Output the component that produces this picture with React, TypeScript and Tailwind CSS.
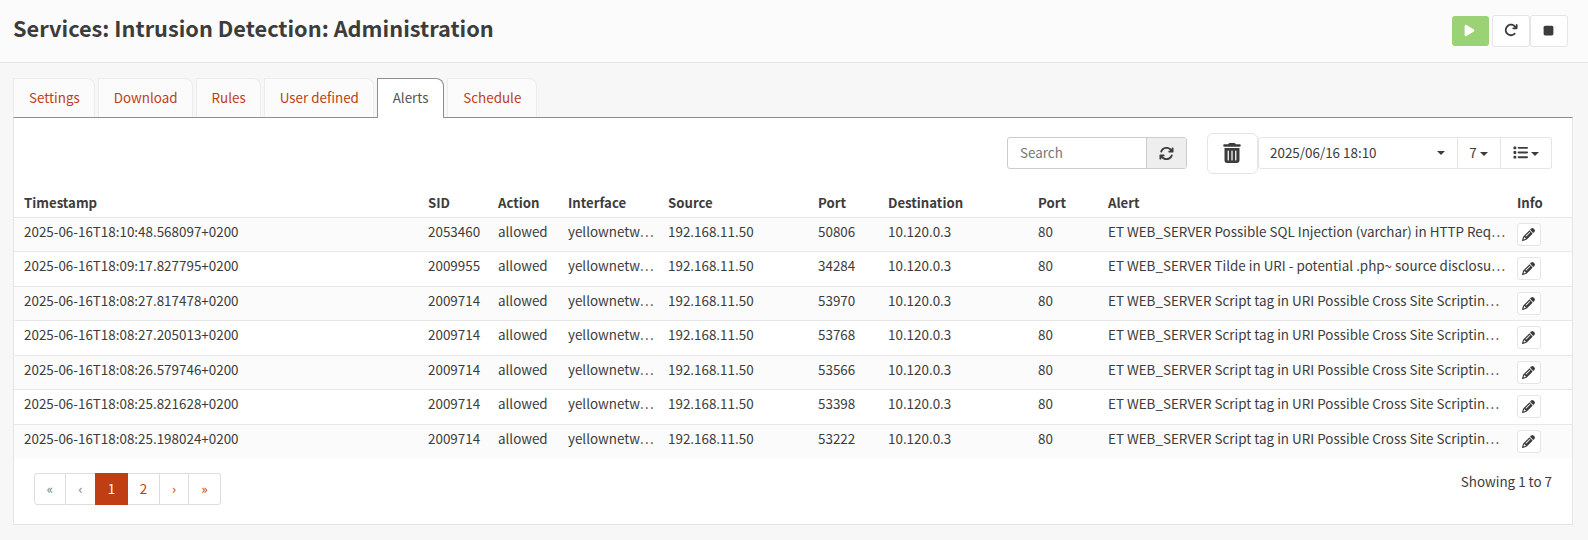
import React from "react";
import { FaPlay, FaStop, FaArrowRotateRight, FaArrowsRotate, FaTrashCan, FaList, FaPencil } from "react-icons/fa6";

const tabs = [
  { name: "Settings", w: "w-[82px]" },
  { name: "Download", w: "w-[95px]" },
  { name: "Rules", w: "w-[65.3px]" },
  { name: "User defined", w: "w-[110.2px]" },
  { name: "Alerts", w: "w-[67.8px]", active: true },
  { name: "Schedule", w: "w-[90px]" },
];

const headers = ["Timestamp", "SID", "Action", "Interface", "Source", "Port", "Destination", "Port", "Alert", "Info"];

const sqlAlert = "ET WEB_SERVER Possible SQL Injection (varchar) in HTTP Req…";
const tildeAlert = "ET WEB_SERVER Tilde in URI - potential .php~ source disclosu…";
const scriptAlert = "ET WEB_SERVER Script tag in URI Possible Cross Site Scriptin…";

const rows = [
  ["2025-06-16T18:10:48.568097+0200", "2053460", "50806", sqlAlert],
  ["2025-06-16T18:09:17.827795+0200", "2009955", "34284", tildeAlert],
  ["2025-06-16T18:08:27.817478+0200", "2009714", "53970", scriptAlert],
  ["2025-06-16T18:08:27.205013+0200", "2009714", "53768", scriptAlert],
  ["2025-06-16T18:08:26.579746+0200", "2009714", "53566", scriptAlert],
  ["2025-06-16T18:08:25.821628+0200", "2009714", "53398", scriptAlert],
  ["2025-06-16T18:08:25.198024+0200", "2009714", "53222", scriptAlert],
];

const grid = "grid grid-cols-[404px_70px_70px_100px_150px_70px_150px_70px_409px_60px] pl-[10px]";

const Caret = ({ className = "" }: { className?: string }) => (
  <span className={`inline-block border-x-4 border-t-4 border-x-transparent border-t-[#3c3c3b] ${className}`} />
);

function Pagination() {
  return (
    <div className="mt-[14.5px] flex h-[32px] w-[187px] rounded-[3px] text-center leading-[28px]">
      <span className="w-[32px] rounded-l-[3px] border border-[#ddd] text-[#777]">«</span>
      <span className="w-[29px] border-y border-[#ddd] text-[#777]">‹</span>
      <span className="w-[33px] border-y border-[#c03e14] bg-[#c03e14] text-white">1</span>
      <span className="w-[32px] border-y border-r border-[#ddd] text-[#c03e14]">2</span>
      <span className="w-[29px] border-y border-r border-[#ddd] text-[#c03e14]">›</span>
      <span className="w-[32px] rounded-r-[3px] border-y border-r border-[#ddd] text-[#c03e14]">»</span>
    </div>
  );
}

export default function App() {
  return (
    <div className="h-[540px] w-[1588px] overflow-hidden bg-[#f7f7f7] font-['Noto_Sans_CJK_JP','Noto_Sans_CJK_SC',sans-serif] text-[13.42px] leading-[20px] text-[#3c3c3b]">
      <header className="flex h-[63px] items-start justify-between border-b border-[#e5e5e5] bg-[#fbfbfb] pr-[20px] pl-[13px]">
        <h1 className="pt-[13px] text-[21.76px] leading-[30px] font-bold">Services: Intrusion Detection: Administration</h1>
        <div className="flex pt-[15px]">
          <button className="mt-px mr-[3px] flex h-[30px] w-[37px] items-center justify-center rounded-[3px] bg-[#9bd275] pr-[2px] pb-px text-white">
            <FaPlay className="size-[13px]" />
          </button>
          <button className="flex h-[32px] w-[38px] items-center justify-center rounded-[3px] border border-[#e5e5e5] bg-white pr-px pb-[2px]">
            <FaArrowRotateRight className="size-[14px]" />
          </button>
          <button className="flex h-[32px] w-[38px] items-center justify-center rounded-[3px] border border-[#e5e5e5] bg-white pr-px pb-[2px]">
            <FaStop className="size-[13px]" />
          </button>
        </div>
      </header>

      <nav className="relative z-10 mt-[15px] ml-[13px] flex h-[40px] gap-[2.8px]">
        {tabs.map((t) => (
          <div
            key={t.name}
            className={
              t.active
                ? `${t.w} h-[40px] rounded-tr-[8px] border border-b-0 border-[#8f8f8f] bg-white pl-[15px] leading-[36px] text-[#555]`
                : `${t.w} h-[39px] rounded-tr-[8px] border border-b-0 border-[#ececec] bg-[#fbfbfb] pl-[15px] leading-[36px] text-[#c03e14]`
            }
          >
            {t.name}
          </div>
        ))}
      </nav>

      <main className="-mt-px ml-[13px] h-[408px] w-[1560px] border border-t-[#8f8f8f] border-r-[#e5e5e5] border-b-[#e5e5e5] border-l-[#e5e5e5] bg-white">
        <div className="flex h-[71px] items-start justify-end pt-[15px] pr-[20px]">
          <div className="mt-[4px] mr-[20px] flex h-[32px] w-[180px] rounded-[3px] border border-[#ccc]">
            <span className="w-[139px] border-r border-[#ccc] pl-[12px] leading-[28px] text-[#777]">Search</span>
            <span className="flex flex-1 items-center justify-center bg-[#eee] pr-px">
              <FaArrowsRotate className="size-[15px]" />
            </span>
          </div>
          <button className="flex h-[41px] w-[51px] items-center justify-center rounded-[6px] border border-[#e5e5e5] pr-px pb-px">
            <FaTrashCan className="size-[20px]" />
          </button>
          <div className="mt-[4px] flex h-[32px] w-[200px] justify-between rounded-l-[3px] border border-[#e5e5e5] pr-[12px] pl-[11px] leading-[28px]">
            2025/06/16 18:10
            <Caret className="mt-[13px] h-0" />
          </div>
          <div className="mt-[4px] flex h-[32px] w-[43px] justify-center gap-[3px] border-y border-r border-[#e5e5e5] pr-px leading-[28px]">
            7<Caret className="mt-[14px] h-0" />
          </div>
          <div className="mt-[4px] flex h-[32px] w-[51px] justify-center gap-[3px] rounded-r-[3px] border-y border-r border-[#e5e5e5] pr-px">
            <FaList className="mt-[7px] size-[15px]" />
            <Caret className="mt-[14px] h-0" />
          </div>
        </div>

        <div className={`${grid} h-[27.9px] pt-px text-[13.2px] leading-[26px] font-bold`}>
          {headers.map((h, i) => (
            <span key={i}>{h}</span>
          ))}
        </div>
        {rows.map(([time, sid, port, alert]) => (
          <div key={time} className={`${grid} h-[34.5px] border-t border-[#e8e8e8] leading-[26px] odd:bg-[#fbfbfb] even:bg-white`}>
            <span>{time}</span>
            <span>{sid}</span>
            <span>allowed</span>
            <span>yellownetw…</span>
            <span>192.168.11.50</span>
            <span>{port}</span>
            <span>10.120.0.3</span>
            <span>80</span>
            <span className="whitespace-nowrap">{alert}</span>
            <span className="pt-[5px]">
              <span className="flex h-[23px] w-[24px] items-center justify-center rounded-[3px] border border-[#e5e5e5] bg-white pr-px">
                <FaPencil className="size-[13px]" />
              </span>
            </span>
          </div>
        ))}

        <div className="flex justify-between pr-[20px] pl-[20px]">
          <Pagination />
          <span className="mt-[12.6px]">Showing 1 to 7</span>
        </div>
      </main>
    </div>
  );
}
